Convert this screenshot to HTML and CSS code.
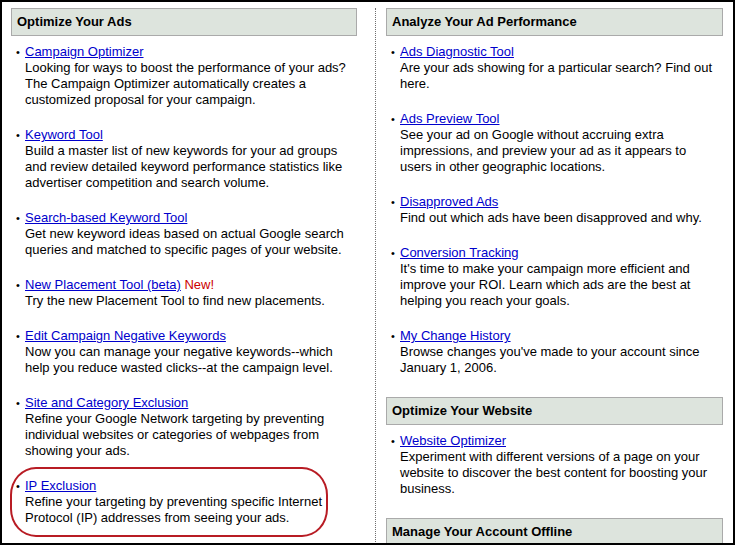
FILE: index.html
```html
<!DOCTYPE html>
<html>
<head>
<meta charset="utf-8">
<link rel="stylesheet" href="styles.css">
</head>
<body>
<div class="frame">
  <div class="col col-left">
    <div class="section">
      <h2 class="head">Optimize Your Ads</h2>
      <ul class="items">
        <li><div class="body"><a href="#">Campaign Optimizer</a><br>Looking for ways to boost the performance of your ads? The Campaign Optimizer automatically creates a customized proposal for your campaign.</div></li>
        <li><div class="body"><a href="#">Keyword Tool</a><br>Build a master list of new keywords for your ad groups and review detailed keyword performance statistics like advertiser competition and search volume.</div></li>
        <li><div class="body"><a href="#">Search-based Keyword Tool</a><br>Get new keyword ideas based on actual Google search queries and matched to specific pages of your website.</div></li>
        <li><div class="body"><a href="#">New Placement Tool (beta)</a> <span class="new">New!</span><br>Try the new Placement Tool to find new placements.</div></li>
        <li><div class="body"><a href="#">Edit Campaign Negative Keywords</a><br>Now you can manage your negative keywords--which help you reduce wasted clicks--at the campaign level.</div></li>
        <li><div class="body"><a href="#">Site and Category Exclusion</a><br>Refine your Google Network targeting by preventing individual websites or categories of webpages from showing your ads.</div></li>
        <li class="circled"><div class="body"><a href="#">IP Exclusion</a><br>Refine your targeting by preventing specific Internet Protocol (IP) addresses from seeing your ads.</div></li>
      </ul>
    </div>
  </div>
  <div class="col col-right">
    <div class="section">
      <h2 class="head">Analyze Your Ad Performance</h2>
      <ul class="items">
        <li><div class="body"><a href="#">Ads Diagnostic Tool</a><br>Are your ads showing for a particular search? Find out here.</div></li>
        <li><div class="body"><a href="#">Ads Preview Tool</a><br>See your ad on Google without accruing extra impressions, and preview your ad as it appears to users in other geographic locations.</div></li>
        <li><div class="body"><a href="#">Disapproved Ads</a><br>Find out which ads have been disapproved and why.</div></li>
        <li><div class="body"><a href="#">Conversion Tracking</a><br>It's time to make your campaign more efficient and improve your ROI. Learn which ads are the best at helping you reach your goals.</div></li>
        <li><div class="body"><a href="#">My Change History</a><br>Browse changes you've made to your account since January 1, 2006.</div></li>
      </ul>
    </div>
    <div class="section">
      <h2 class="head">Optimize Your Website</h2>
      <ul class="items">
        <li><div class="body"><a href="#">Website Optimizer</a><br>Experiment with different versions of a page on your website to discover the best content for boosting your business.</div></li>
      </ul>
    </div>
    <div class="section">
      <h2 class="head">Manage Your Account Offline</h2>
    </div>
  </div>
</div>
</body>
</html>
```

FILE: styles.css
```css
html, body {
  margin: 0;
  padding: 0;
  background: #fff;
}

body {
  font-family: "Liberation Sans", Arial, sans-serif;
  font-size: 13px;
  line-height: 16px;
  color: #000;
}

.frame {
  box-sizing: border-box;
  width: 735px;
  height: 545px;
  border: 2px solid #000;
  padding: 6px 10px 0 9px;
  display: grid;
  grid-template-columns: 346px 1fr;
  column-gap: 18px;
  overflow: hidden;
}

.col-right {
  border-left: 1px dotted #6f6f6f;
  padding-left: 10px;
}

/* collapses with the 19px bottom margin of the previous list */
.section + .section {
  margin-top: 21px;
}

.head {
  margin: 0;
  padding: 4px 5px;
  background: #dde4dd;
  border: 1px solid #aaaaaa;
  font-size: 13px;
  line-height: 18px;
  font-weight: bold;
  color: #000;
}

.items {
  list-style: none;
  margin: 8px 0 0;
  padding: 0;
}

.items li {
  display: grid;
  grid-template-columns: 14px 1fr;
  margin-bottom: 19px;
}

.col-right .items li {
  padding-right: 8px;
}

.items li::before {
  content: "\2022";
  padding-left: 5px;
  font-size: 11px;
}

.items a {
  color: #0000cc;
  text-decoration: underline;
}

.new {
  color: #cc0000;
}

.circled {
  position: relative;
}

.circled::after {
  content: "";
  position: absolute;
  top: -11px;
  bottom: -11px;
  left: -1px;
  right: 29px;
  border: 2px solid #b81c24;
  border-radius: 26px / 28px;
  pointer-events: none;
}
```
